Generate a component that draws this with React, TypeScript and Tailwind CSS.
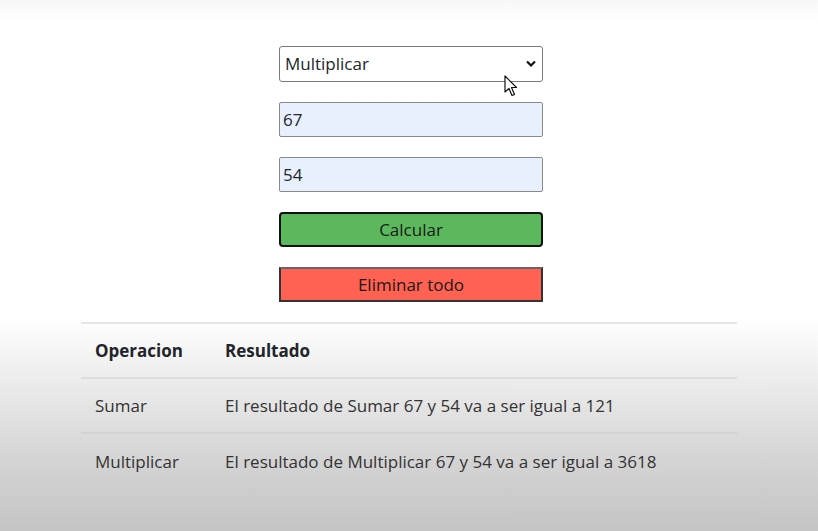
import React from "react";

export default function App() {
  const font = { fontFamily: '"Open Sans", "Noto Sans", sans-serif' };
  return (
    <div
      className="relative w-full h-[531px] overflow-hidden bg-[linear-gradient(to_bottom,#f7f7f7_0%,#ffffff_4%,#ffffff_60%,#d6d6d6_85%,#c4c4c4_100%)] text-[#212529]"
      style={font}
    >
      <div className="pt-[46px] flex flex-col items-center">
        <div className="w-[264px] ml-[4px] flex flex-col gap-[20px]">
          <div className="relative h-[36px] border-[1.5px] border-[#7a7a7a] rounded-[3px] bg-white flex items-center pl-[5px] text-[17px]">
            <span>Multiplicar</span>
            <svg className="absolute right-[6px] top-[13px]" width="10" height="8" viewBox="0 0 10 8">
              <path d="M1 1.5 L5 5.5 L9 1.5" fill="none" stroke="#111" strokeWidth="2.2" />
            </svg>
          </div>
          <div className="h-[35px] border-[1.5px] border-[#8a8a8a] rounded-[2px] bg-[#e8f0fe] flex items-center pl-[3px] text-[17px]">
            67
          </div>
          <div className="h-[35px] border-[1.5px] border-[#8a8a8a] rounded-[2px] bg-[#e8f0fe] flex items-center pl-[3px] text-[17px]">
            54
          </div>
          <div className="h-[35px] border-2 border-[#111] rounded-[4px] bg-[#5cb85c] flex items-center justify-center text-[17px] text-[#1a1a1a]">
            Calcular
          </div>
          <div className="h-[35px] border-2 border-[#333] border-t-[#666] bg-[#ff6152] flex items-center justify-center text-[17px] text-[#1a1a1a]">
            Eliminar todo
          </div>
        </div>
        <div className="w-[656px] mt-[20px] border-t-2 border-[#e6e6e6] text-[17px]">
          <div className="flex h-[55px] items-center border-b-2 border-[#dcdcdc] font-bold">
            <div className="w-[144px] pl-[14px]">Operacion</div>
            <div>Resultado</div>
          </div>
          <div className="flex h-[55px] items-center border-b-2 border-[#d2d2d2] text-[#333]">
            <div className="w-[144px] pl-[14px]">Sumar</div>
            <div>El resultado de Sumar 67 y 54 va a ser igual a 121</div>
          </div>
          <div className="flex h-[55px] items-center text-[#333]">
            <div className="w-[144px] pl-[14px]">Multiplicar</div>
            <div>El resultado de Multiplicar 67 y 54 va a ser igual a 3618</div>
          </div>
        </div>
      </div>
      <svg className="absolute left-[504px] top-[75px]" width="16" height="24" viewBox="0 0 16 24">
        <path d="M1 1 L1 17 L5 13.5 L8 20.5 L10.5 19.5 L7.5 12.5 L12.5 12.5 Z" fill="#fff" stroke="#111" strokeWidth="1.2" strokeLinejoin="round" />
      </svg>
    </div>
  );
}
